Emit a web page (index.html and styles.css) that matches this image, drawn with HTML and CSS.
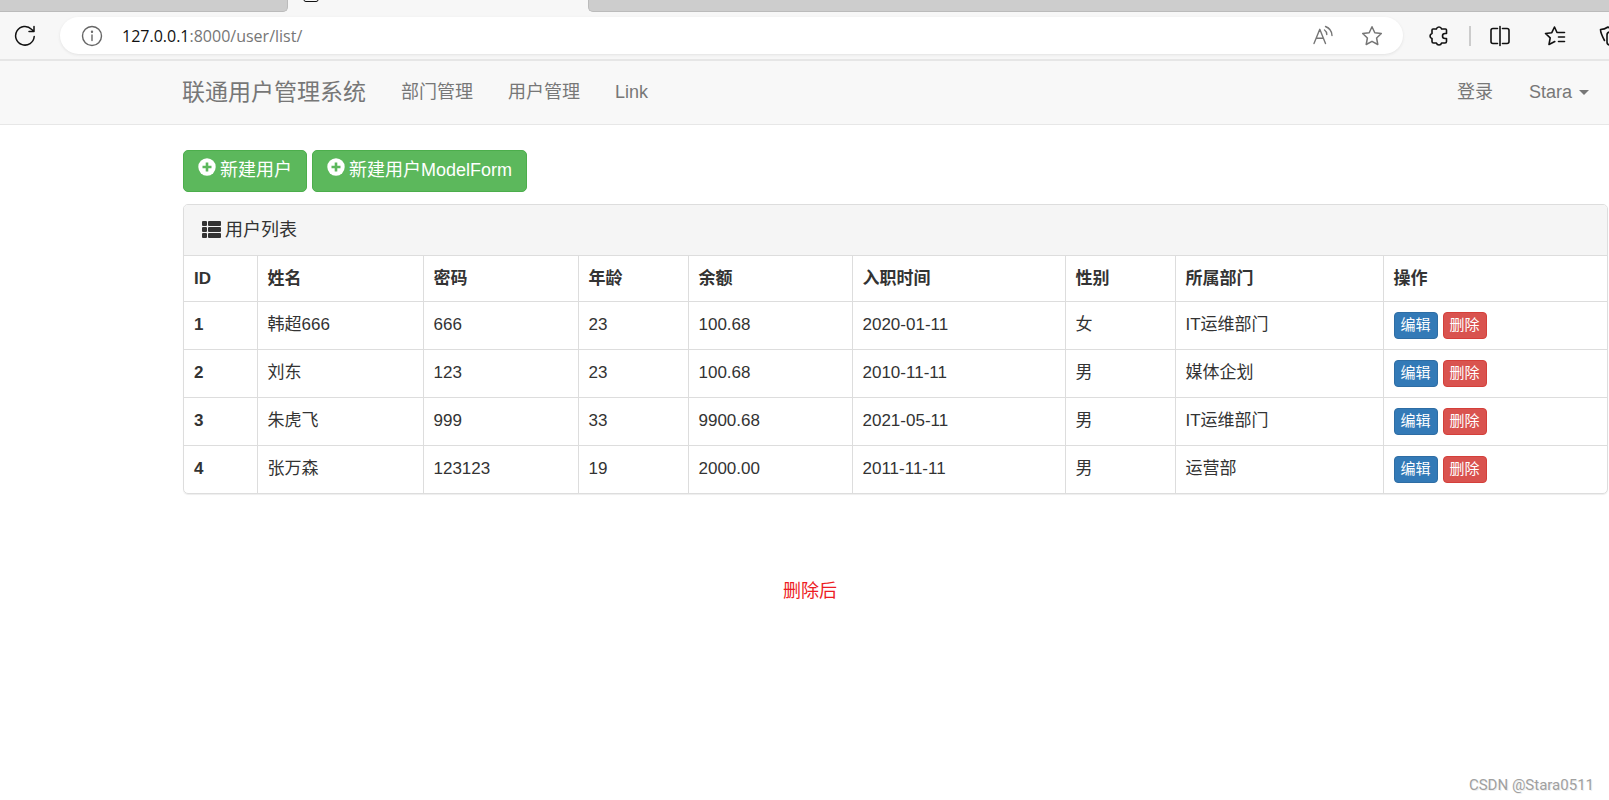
FILE: index.html
```html
<!DOCTYPE html>
<html lang="zh-CN">
<head>
<meta charset="utf-8">
<title>用户列表</title>
<link rel="stylesheet" href="styles.css">
</head>
<body>
<div class="tabstrip">
  <div class="tab tab-left"></div>
  <div class="tab-active">
    <svg width="16" height="2" viewBox="0 0 16 2" fill="none" stroke="#111" stroke-width="1"><path d="M1 0Q1 1.500 3 1.500H13Q15 1.500 15 0"/></svg>
  </div>
  <div class="tab tab-right"></div>
</div>
<div class="toolbar">
  <button class="icon-btn" aria-label="刷新">
    <svg width="22" height="22" viewBox="0 0 22 22" fill="none" stroke="#111" stroke-width="1.5" stroke-linecap="round" stroke-linejoin="round"><path d="M20.2 11.5A9.3 9.3 0 1 1 17.5 4.2L20 6.5M20 1.5V6.5H15"/></svg>
  </button>
  <div class="address">
    <svg width="22" height="22" viewBox="0 0 22 22" fill="none" stroke="#666" stroke-width="1.4" stroke-linecap="round"><circle cx="11" cy="11" r="9.5"/><path d="M11 10V15.5"/><circle cx="11" cy="6.8" r=".5" fill="#666"/></svg>
    <div class="url" role="textbox" aria-label="地址">127.0.0.1<span class="url-path">:8000/user/list/</span></div>
    <button class="icon-btn" aria-label="大声朗读">
      <svg width="22" height="22" viewBox="0 0 22 22" fill="none" stroke="#767676" stroke-width="1.4" stroke-linecap="round" stroke-linejoin="round"><path d="M2 18.5L7.8 4.3L13.5 18.5M4.2 13.3H11.5M12.500 5Q14.800 6.500 14.800 9.500M13.500 1.500Q19.800 4 20 10.500"/></svg>
    </button>
    <button class="icon-btn" aria-label="收藏">
      <svg width="22" height="22" viewBox="0 0 22 22" fill="none" stroke="#767676" stroke-width="1.5" stroke-linejoin="round"><path d="M11 1.8L13.8 7.7L20.3 8.5L15.6 13L16.8 19.5L11 16.3L5.2 19.5L6.4 13L1.7 8.5L8.2 7.7Z"/></svg>
    </button>
  </div>
  <div class="actions">
    <button class="icon-btn" aria-label="扩展">
      <svg width="22" height="22" viewBox="0 0 22 22" fill="none" stroke="#111" stroke-width="1.6" stroke-linejoin="round"><path d="M5 4H8.4A2.7 2.7 0 0 1 13.6 4H17.5Q18.5 4 18.5 5V8.5H17A2.5 2.5 0 0 0 17 13.5H18.5V16.5Q18.5 18 17 18H13.6A2.7 2.7 0 0 1 8.4 18H5.5Q4 18 4 16.5V13.6A2.7 2.7 0 0 1 4 8.4V5Q4 4 5 4Z"/></svg>
    </button>
    <span class="divider"></span>
    <button class="icon-btn" aria-label="拆分屏幕">
      <svg width="22" height="22" viewBox="0 0 22 22" fill="none" stroke="#111" stroke-width="1.6" stroke-linecap="round"><path d="M8.5 3.5H4Q2 3.5 2 5.500V16.500Q2 18.500 4 18.500H8.500M13.500 3.500H18Q20 3.500 20 5.500V16.500Q20 18.500 18 18.500H13.500M11 1.500V20.500"/></svg>
    </button>
    <button class="icon-btn" aria-label="收藏夹">
      <svg width="22" height="22" viewBox="0 0 22 22" fill="none" stroke="#111" stroke-width="1.6" stroke-linecap="round" stroke-linejoin="round"><path d="M13 7.500L10.500 2L7.800 7.700L1.500 8.500L6.200 12.900L5 19.500L10.800 16.500M13 7.500H20.500M14.500 12H20.500M14.500 16.500H20.500"/></svg>
    </button>
    <button class="icon-btn" aria-label="集锦">
      <svg width="22" height="22" viewBox="0 0 22 22" fill="none" stroke="#111" stroke-width="1.6" stroke-linecap="round" stroke-linejoin="round"><path d="M5.500 15.500Q1.500 8 1.500 4.500Q5.500 4.500 9 2Q13 4.500 17 5"/><rect x="8" y="7" width="12" height="13" rx="3"/></svg>
    </button>
  </div>
</div>
<nav class="navbar">
  <a class="brand" href="#">联通用户管理系统</a>
  <a href="#">部门管理</a>
  <a href="#">用户管理</a>
  <a href="#">Link</a>
  <div class="nav-right">
    <a href="#">登录</a>
    <a class="dropdown" href="#">Stara <span class="caret"></span></a>
  </div>
</nav>
<main class="content">
  <div class="buttons">
    <a class="btn" href="#"><svg width="18" height="18" viewBox="0 0 18 18"><circle cx="9" cy="9" r="8.700" fill="#fff"/><path d="M9 4.500V13.500M4.500 9H13.500" stroke="#5cb85c" stroke-width="2.600"/></svg>新建用户</a>
    <a class="btn" href="#"><svg width="18" height="18" viewBox="0 0 18 18"><circle cx="9" cy="9" r="8.700" fill="#fff"/><path d="M9 4.500V13.500M4.500 9H13.500" stroke="#5cb85c" stroke-width="2.600"/></svg>新建用户ModelForm</a>
  </div>
  <section class="panel">
    <div class="panel-heading">
      <svg width="19" height="18" viewBox="0 0 19 18" fill="#333"><rect x="0" y="0" width="5" height="5" rx="1"/><rect x="6" y="0" width="13" height="5" rx="1"/><rect x="0" y="6" width="5" height="5" rx="1"/><rect x="6" y="6" width="13" height="5" rx="1"/><rect x="0" y="12" width="5" height="5" rx="1"/><rect x="6" y="12" width="13" height="5" rx="1"/></svg>用户列表
    </div>
    <table class="users">
      <colgroup><col class="c-id"><col class="c-name"><col class="c-pwd"><col class="c-age"><col class="c-money"><col class="c-date"><col class="c-sex"><col class="c-dept"><col></colgroup>
      <thead>
        <tr><th>ID</th><th>姓名</th><th>密码</th><th>年龄</th><th>余额</th><th>入职时间</th><th>性别</th><th>所属部门</th><th>操作</th></tr>
      </thead>
      <tbody>
        <tr><th>1</th><td>韩超666</td><td>666</td><td>23</td><td>100.68</td><td>2020-01-11</td><td>女</td><td>IT运维部门</td><td><div class="ops"><a class="btn-xs edit" href="#">编辑</a><a class="btn-xs delete" href="#">删除</a></div></td></tr>
        <tr><th>2</th><td>刘东</td><td>123</td><td>23</td><td>100.68</td><td>2010-11-11</td><td>男</td><td>媒体企划</td><td><div class="ops"><a class="btn-xs edit" href="#">编辑</a><a class="btn-xs delete" href="#">删除</a></div></td></tr>
        <tr><th>3</th><td>朱虎飞</td><td>999</td><td>33</td><td>9900.68</td><td>2021-05-11</td><td>男</td><td>IT运维部门</td><td><div class="ops"><a class="btn-xs edit" href="#">编辑</a><a class="btn-xs delete" href="#">删除</a></div></td></tr>
        <tr><th>4</th><td>张万森</td><td>123123</td><td>19</td><td>2000.00</td><td>2011-11-11</td><td>男</td><td>运营部</td><td><div class="ops"><a class="btn-xs edit" href="#">编辑</a><a class="btn-xs delete" href="#">删除</a></div></td></tr>
      </tbody>
    </table>
  </section>
</main>
<p class="note">删除后</p>
<footer class="watermark">CSDN @Stara0511</footer>
</body>
</html>
```

FILE: styles.css
```css
* { box-sizing: border-box; }

body {
  margin: 0;
  min-height: 100vh;
  display: flex;
  flex-direction: column;
  overflow-x: hidden;
  background: #fff;
  color: #333;
  font: 18px/25px "Liberation Sans", "Noto Sans CJK SC", sans-serif;
}

a { color: inherit; text-decoration: none; }
svg { display: block; flex: none; }

/* browser chrome */
.tabstrip { display: flex; height: 12px; background: #f7f7f7; }
.tab { background: #cdcdcd; border-bottom: 1px solid #bbb; }
.tab-left { width: 288px; border-right: 1px solid #bbb; border-bottom-right-radius: 5px; }
.tab-active { width: 300px; padding-left: 15px; }
.tab-right { flex: 1; border-left: 1px solid #bbb; border-bottom-left-radius: 5px; }

.toolbar {
  display: flex;
  align-items: center;
  height: 49px;
  padding-left: 14px;
  background: #f7f7f7;
  border-bottom: 2px solid #e6e6e6;
}
.icon-btn { flex: none; padding: 0; border: 0; background: none; }
.address {
  flex: 1;
  display: flex;
  align-items: center;
  height: 37px;
  margin-left: 24px;
  padding: 0 20px 0 21px;
  border-radius: 19px;
  background: #fff;
  box-shadow: 0 1px 3px #e2e2e2;
}
.url { flex: 1; margin-left: 19px; color: #111; font: 16px/24px "Open Sans", sans-serif; }
.url-path { color: #767676; }
.address .icon-btn + .icon-btn { margin-left: 27px; }
.actions { display: flex; align-items: center; width: 206px; padding-left: 25px; overflow: hidden; }
.divider { flex: none; width: 2px; height: 20px; margin: 0 18px 0 19px; background: #ccc; }
.divider ~ .icon-btn + .icon-btn { margin-left: 33px; }

/* site navigation */
.navbar {
  display: flex;
  align-items: center;
  gap: 35px;
  height: 64px;
  padding: 0 20px 0 182px;
  background: #f8f8f8;
  border-bottom: 1px solid #e7e7e7;
  color: #777;
}
.brand { font-size: 23px; }
.nav-right { display: flex; align-items: center; gap: 36px; margin-left: auto; }
.dropdown { display: flex; align-items: center; gap: 7px; }
.caret { border: 5px solid transparent; border-top-color: #777; border-bottom: 0; }

.content { padding: 25px 1px 0 183px; }
.buttons { display: flex; gap: 5px; }
.btn {
  display: flex;
  gap: 4px;
  height: 42px;
  padding: 7px 14px;
  border: 1px solid #4cae4c;
  border-radius: 5px;
  background: #5cb85c;
  color: #fff;
}

.panel {
  margin-top: 12px;
  border: 1px solid #ddd;
  border-radius: 5px;
  box-shadow: 0 1px 1px #eee;
  overflow: hidden;
}
.panel-heading {
  display: flex;
  align-items: center;
  gap: 4px;
  height: 51px;
  padding: 0 18px;
  background: #f5f5f5;
  border-bottom: 1px solid #ddd;
}

.users { width: 100%; table-layout: fixed; border-collapse: collapse; font-size: 17px; }
.users th, .users td {
  padding: 10px;
  border: 1px solid #ddd;
  text-align: left;
  vertical-align: top;
}
.users th:first-child { border-left: 0; }
.users th:last-child, .users td:last-child { border-right: 0; }
.users thead th { border-top: 0; }
.users tbody tr:last-child > * { border-bottom: 0; }
.c-id { width: 73px; }
.c-name { width: 166px; }
.c-pwd { width: 155px; }
.c-age { width: 110px; }
.c-money { width: 164px; }
.c-date { width: 213px; }
.c-sex { width: 110px; }
.c-dept { width: 208px; }

.ops { display: flex; gap: 5px; }
.btn-xs {
  height: 27px;
  padding: 0 6px;
  border: 1px solid;
  border-radius: 4px;
  color: #fff;
  font-size: 15px;
  line-height: 24px;
}
.edit { background: #337ab7; border-color: #2e6da4; }
.delete { background: #d9534f; border-color: #d43f3a; }

.note { margin: 85px 0 0; padding-left: 11px; color: #ed1c24; text-align: center; }
.watermark {
  margin-top: auto;
  padding: 0 15px 2px;
  color: #a0a0a0;
  font: 15px/25px Roboto, sans-serif;
  text-align: right;
  text-shadow: 1px 1px 0 #eee;
}
```
